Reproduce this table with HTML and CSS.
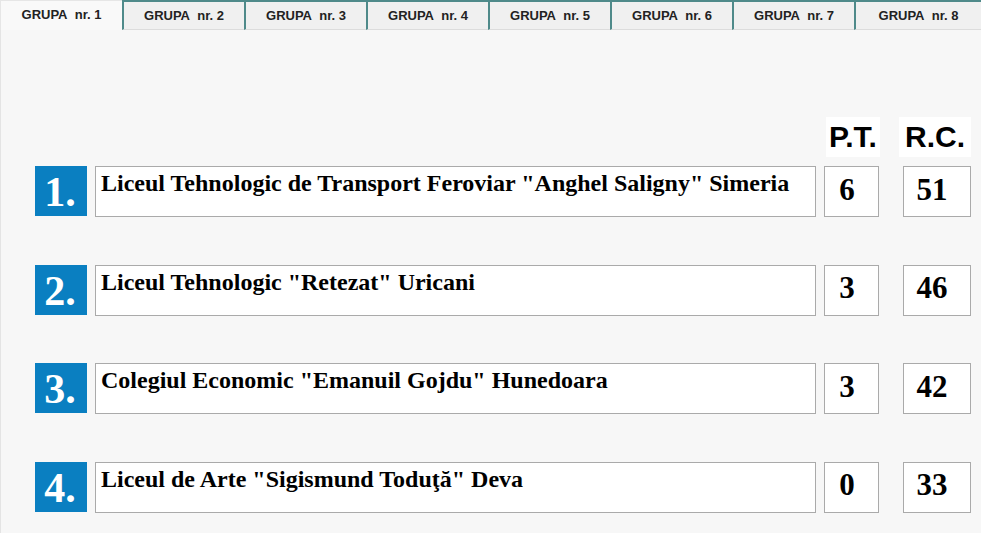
FILE: index.html
```html
<!DOCTYPE html>
<html>
<head>
<meta charset="utf-8">
<link rel="stylesheet" href="styles.css">
</head>
<body>
<div class="tabs">
  <div class="tab active">GRUPA&nbsp; nr. 1</div>
  <div class="tab">GRUPA&nbsp; nr. 2</div>
  <div class="tab">GRUPA&nbsp; nr. 3</div>
  <div class="tab">GRUPA&nbsp; nr. 4</div>
  <div class="tab">GRUPA&nbsp; nr. 5</div>
  <div class="tab">GRUPA&nbsp; nr. 6</div>
  <div class="tab">GRUPA&nbsp; nr. 7</div>
  <div class="tab last">GRUPA&nbsp; nr. 8</div>
</div>
<div class="panel">
  <div class="head">
    <div class="hpt">P.T.</div>
    <div class="hrc">R.C.</div>
  </div>
  <div class="rows">
    <div class="row">
      <div class="num">1.</div>
      <div class="name">Liceul Tehnologic de Transport Feroviar "Anghel Saligny" Simeria</div>
      <div class="pt">6</div>
      <div class="rc">51</div>
    </div>
    <div class="row">
      <div class="num">2.</div>
      <div class="name">Liceul Tehnologic "Retezat" Uricani</div>
      <div class="pt">3</div>
      <div class="rc">46</div>
    </div>
    <div class="row">
      <div class="num">3.</div>
      <div class="name">Colegiul Economic "Emanuil Gojdu" Hunedoara</div>
      <div class="pt">3</div>
      <div class="rc">42</div>
    </div>
    <div class="row">
      <div class="num">4.</div>
      <div class="name">Liceul de Arte "Sigismund Toduţă" Deva</div>
      <div class="pt">0</div>
      <div class="rc">33</div>
    </div>
  </div>
</div>
</body>
</html>
```
FILE: styles.css
```css
html, body {
  margin: 0;
  padding: 0;
  background: #f7f7f7;
  height: 100%;
}
body {
  width: 981px;
  height: 533px;
  overflow: hidden;
}
.tabs {
  display: flex;
  height: 30px;
  box-sizing: border-box;
}
.tab {
  width: 122px;
  flex: none;
  box-sizing: border-box;
  height: 30px;
  background: #f0f0f0;
  border-top: 2px solid #4f8a8a;
  border-left: 2px solid #4f8a8a;
  border-bottom: 1px solid #dcdcdc;
  font-family: "Liberation Sans", Arial, sans-serif;
  font-weight: bold;
  font-size: 13px;
  color: #222;
  display: flex;
  align-items: center;
  justify-content: center;
  padding-bottom: 1px;
}
.tab.active {
  background: #f9f9f9;
  border-top: 1px solid #e6e6e6;
  border-left: 1px solid #e6e6e6;
  border-bottom: none;
  padding-top: 0;
  padding-bottom: 2px;
}
.tab.last {
  width: 127px;
}
.panel {
  border-left: 1px solid #e4e4e4;
  height: 503px;
  box-sizing: border-box;
  padding-top: 87px;
}
.head {
  display: flex;
  height: 36px;
  margin-bottom: 13px;
}
.hpt, .hrc {
  background: #fff;
  font-family: "Liberation Sans", Arial, sans-serif;
  font-weight: bold;
  font-size: 30px;
  color: #000;
  display: flex;
  align-items: center;
  justify-content: center;
  height: 40px;
}
.hpt {
  margin-left: 825px;
  width: 54px;
}
.hrc {
  margin-left: 19px;
  width: 72px;
}
.rows {
  display: flex;
  flex-direction: column;
  gap: 48.5px;
}
.row {
  display: flex;
  height: 50px;
  padding-left: 34px;
}
.num {
  width: 52px;
  height: 50px;
  background: #0a7fc1;
  color: #fff;
  font-family: "Liberation Serif", "Times New Roman", serif;
  font-weight: bold;
  font-size: 42px;
  line-height: 52px;
  text-align: center;
  padding-right: 2px;
  box-sizing: border-box;
}
.name {
  margin-left: 8px;
  width: 721px;
  height: 51px;
  box-sizing: border-box;
  background: #fff;
  border: 1px solid #aaa;
  font-family: "Liberation Serif", "Times New Roman", serif;
  font-weight: bold;
  font-size: 24px;
  line-height: 28px;
  padding: 2px 0 0 5px;
  color: #000;
  white-space: nowrap;
}
.pt, .rc {
  height: 51px;
  box-sizing: border-box;
  background: #fff;
  border: 1px solid #aaa;
  font-family: "Liberation Serif", "Times New Roman", serif;
  font-weight: bold;
  font-size: 31px;
  color: #000;
  display: flex;
  align-items: center;
  justify-content: center;
  padding-bottom: 4px;
}
.pt {
  margin-left: 8px;
  width: 55px;
  padding-right: 9px;
}
.rc {
  margin-left: 24px;
  width: 68px;
  padding-right: 10px;
}
```
